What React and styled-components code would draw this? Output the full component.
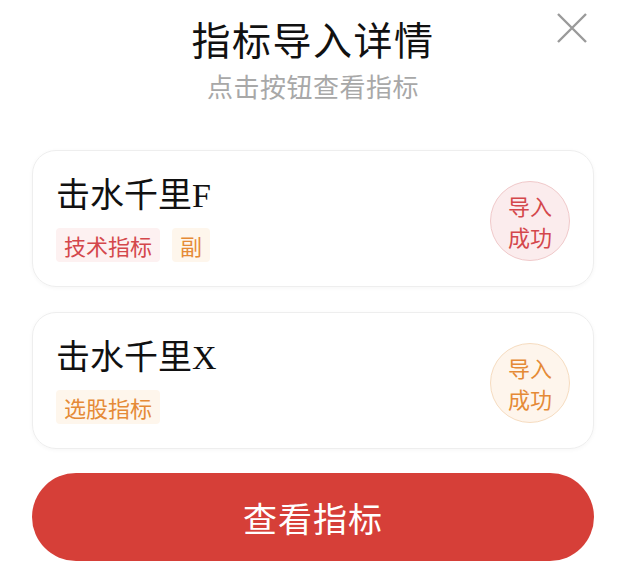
import React from "react";
import styled, { createGlobalStyle } from "styled-components";

const GlobalStyle = createGlobalStyle`
  body {
    margin: 0;
    background: #fff;
    font-family: "Noto Sans CJK SC", "Noto Sans", sans-serif;
  }
`;

const Panel = styled.div`
  position: relative;
  width: 626px;
  height: 564px;
  box-sizing: border-box;
  padding: 10px 32px 0;
  background: #fff;
  overflow: hidden;
`;

const Header = styled.div`
  display: flex;
  flex-direction: column;
  align-items: center;
`;

const Title = styled.div`
  font-size: 39px;
  line-height: 56px;
  color: #111;
  letter-spacing: 1.5px;
`;

const SubTitle = styled.div`
  margin-top: 2px;
  font-size: 26px;
  line-height: 36px;
  color: #a8a8a8;
  letter-spacing: 0.5px;
`;

const CloseBtn = styled.div`
  position: absolute;
  top: 12px;
  right: 38px;
  width: 32px;
  height: 32px;
`;

const List = styled.div`
  display: flex;
  flex-direction: column;
  gap: 25px;
  margin-top: 46px;
`;

const Card = styled.div`
  display: flex;
  align-items: center;
  justify-content: space-between;
  height: 137px;
  box-sizing: border-box;
  padding: 0 23px;
  border: 1px solid #eeeeee;
  border-radius: 24px;
  box-shadow: 0 1px 4px rgba(0, 0, 0, 0.04);
`;

const Info = styled.div`
  display: flex;
  flex-direction: column;
  gap: 12px;
`;

const Name = styled.div`
  font-family: "Liberation Serif", "Noto Sans CJK SC", serif;
  font-size: 34px;
  line-height: 40px;
  color: #111;
`;

const Tags = styled.div`
  display: flex;
  gap: 12px;
`;

const Tag = styled.span`
  display: inline-flex;
  align-items: center;
  height: 34px;
  padding: 0 8px;
  border-radius: 4px;
  font-size: 22px;
  color: ${p => (p.tone === "red" ? "#d4474b" : "#e58a36")};
  background: ${p => (p.tone === "red" ? "#fdf1f1" : "#fef6ec")};
`;

const Badge = styled.div`
  display: flex;
  flex-direction: column;
  align-items: center;
  justify-content: center;
  width: 80px;
  height: 80px;
  box-sizing: border-box;
  margin-top: 4px;
  border-radius: 50%;
  font-size: 22px;
  line-height: 31px;
  color: ${p => (p.tone === "red" ? "#d4474b" : "#e58a36")};
  background: ${p => (p.tone === "red" ? "#fbeced" : "#fef5ec")};
  border: 1px solid ${p => (p.tone === "red" ? "#f0c9ca" : "#f6dcc0")};
`;

const ViewButton = styled.button`
  display: flex;
  align-items: center;
  justify-content: center;
  width: 100%;
  height: 88px;
  margin-top: 24px;
  border: none;
  border-radius: 44px;
  background: #d63f38;
  color: #fff;
  font-family: "Noto Sans CJK SC", sans-serif;
  font-size: 34px;
  letter-spacing: 1px;
`;

const items = [
  { name: "击水千里F", tags: [{ text: "技术指标", tone: "red" }, { text: "副", tone: "orange" }], tone: "red" },
  { name: "击水千里X", tags: [{ text: "选股指标", tone: "orange" }], tone: "orange" }
];

function App() {
  return (
    <>
      <GlobalStyle />
      <Panel>
        <Header>
          <Title>指标导入详情</Title>
          <SubTitle>点击按钮查看指标</SubTitle>
        </Header>
        <CloseBtn>
          <svg width="32" height="32" viewBox="0 0 32 32">
            <path d="M2 2L30 30M30 2L2 30" stroke="#9a9a9a" strokeWidth="2.4" />
          </svg>
        </CloseBtn>
        <List>
          {items.map(item => (
            <Card key={item.name}>
              <Info>
                <Name>{item.name}</Name>
                <Tags>
                  {item.tags.map(t => (
                    <Tag key={t.text} tone={t.tone}>{t.text}</Tag>
                  ))}
                </Tags>
              </Info>
              <Badge tone={item.tone}>
                <span>导入</span>
                <span>成功</span>
              </Badge>
            </Card>
          ))}
        </List>
        <ViewButton>查看指标</ViewButton>
      </Panel>
    </>
  );
}

export default App;
